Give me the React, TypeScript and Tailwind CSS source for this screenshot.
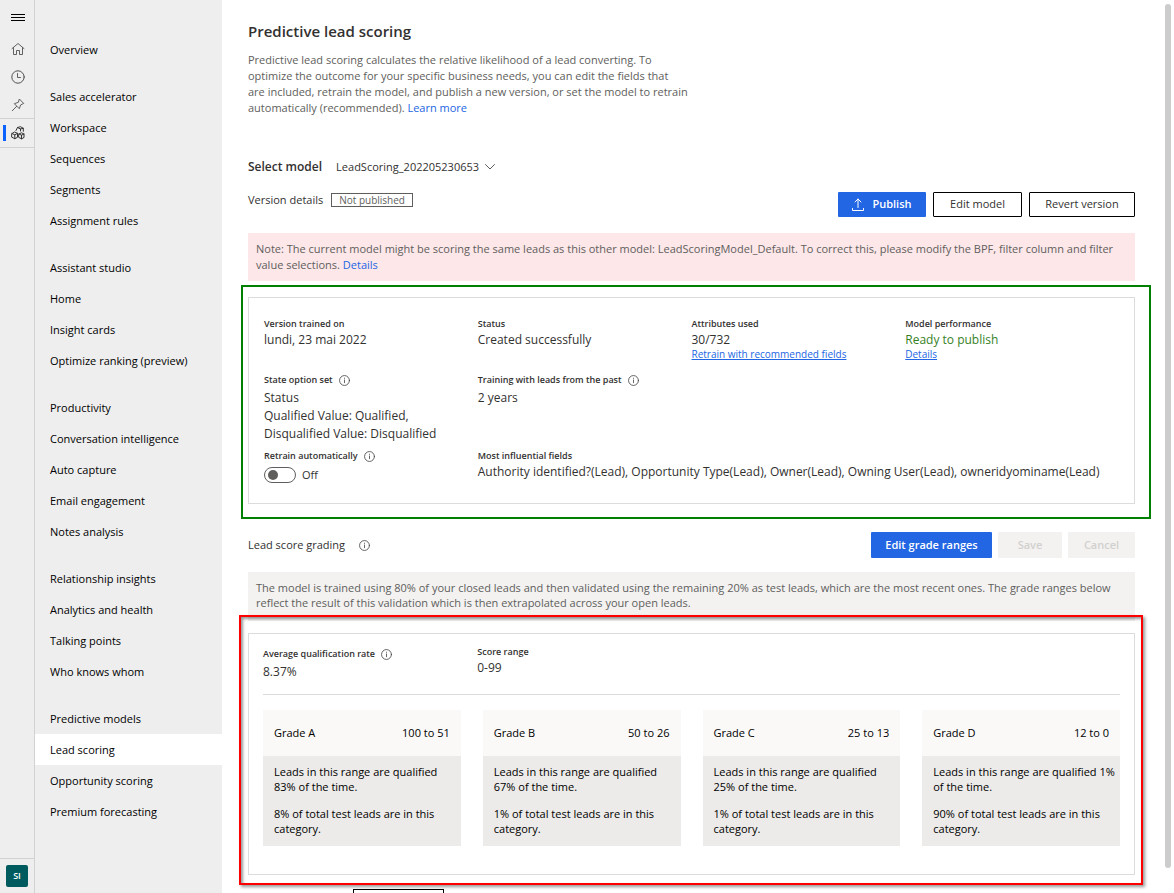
const navGroups = [
  { title: "", items: ["Overview"] },
  {
    title: "Sales accelerator",
    items: ["Workspace", "Sequences", "Segments", "Assignment rules"],
  },
  {
    title: "Assistant studio",
    items: ["Home", "Insight cards", "Optimize ranking (preview)"],
  },
  {
    title: "Productivity",
    items: [
      "Conversation intelligence",
      "Auto capture",
      "Email engagement",
      "Notes analysis",
    ],
  },
  {
    title: "Relationship insights",
    items: ["Analytics and health", "Talking points", "Who knows whom"],
  },
  {
    title: "Predictive models",
    items: ["Lead scoring", "Opportunity scoring", "Premium forecasting"],
  },
];

const grades = [
  {
    name: "Grade A",
    range: "100 to 51",
    qualified: "Leads in this range are qualified\n83% of the time.",
    total: "8% of total test leads are in this category.",
  },
  {
    name: "Grade B",
    range: "50 to 26",
    qualified: "Leads in this range are qualified\n67% of the time.",
    total: "1% of total test leads are in this category.",
  },
  {
    name: "Grade C",
    range: "25 to 13",
    qualified: "Leads in this range are qualified\n25% of the time.",
    total: "1% of total test leads are in this category.",
  },
  {
    name: "Grade D",
    range: "12 to 0",
    qualified: "Leads in this range are qualified 1%\nof the time.",
    total: "90% of total test leads are in this category.",
  },
];

const iconProps = {
  fill: "none",
  stroke: "currentColor",
  strokeLinecap: "round" as const,
  strokeLinejoin: "round" as const,
};

const InfoIcon = () => (
  <svg viewBox="0 0 12 12" className="size-[11px] shrink-0 text-[#484644]" {...iconProps}>
    <circle cx="6" cy="6" r="5.4" strokeWidth="0.9" />
    <path d="M6 5.4v3M6 3.4v.3" strokeWidth="0.9" />
  </svg>
);

const Rail = () => (
  <div className="flex w-[35px] shrink-0 flex-col border-r border-[#d2d2d2] text-[#505050]">
    <button aria-label="Menu" className="flex h-[35px] items-center pl-[11px] text-black">
      <svg viewBox="0 0 14 8" className="h-2 w-[14px]" fill="currentColor">
        <path d="M0 0h14v1H0zM0 3h14v1H0zM0 6h14v1H0z" />
      </svg>
    </button>
    <button aria-label="Home" className="flex h-7 items-center pl-[11px]">
      <svg viewBox="0 0 14 14" className="size-[14px]" {...iconProps}>
        <path d="M1 6.600 7 1.500l6 5.100M2.500 5.600v6.900h3V8.500h3v4h3V5.600" strokeWidth="0.9" />
      </svg>
    </button>
    <button aria-label="Recent" className="flex h-7 items-center pl-[11px]">
      <svg viewBox="0 0 14 14" className="size-[14px]" {...iconProps}>
        <circle cx="7" cy="7" r="6.2" />
        <path d="M6.500 3.500v4h3" strokeWidth="0.9" />
      </svg>
    </button>
    <button aria-label="Pinned" className="flex h-[27px] items-center pl-[11px]">
      <svg viewBox="0 0 14 14" className="size-[14px]" {...iconProps}>
        <path
          d="M8.600 1.300 12.700 5.400 9.600 7l-1.300 3.700L3.300 5.700 7 4.400zM5.600 8.400 1.300 12.700"
          strokeWidth="0.9"
        />
      </svg>
    </button>
    <button
      aria-label="Sales insights"
      className="flex h-[30px] items-center border-y border-[#d2d2d2] pl-[3px]">
      <span className="h-4 w-[3px] bg-[#0b62fe]" />
      <svg viewBox="0 0 14 14" className="ml-[5px] size-[14px] text-[#333]" {...iconProps}>
        <path d="M5 4.500 6.500 1.500l3-.8 2.800 1.600v3M6.500 1.500l3 1.500 2.800-.7M9.500 3v2" />
        <path d="M1 7.500 3.500 6l3 1.300v4L3.800 12.700 1 11.300zM1 7.500l2.800 1.300 2.700-1.500M3.800 8.800v3.900" />
        <path d="M8 8l2.500-1.200L13 8v3.500l-2.500 1.300L8 11.500zM8 8l2.500 1.200L13 8M10.500 9.200v3.600" />
      </svg>
    </button>
    <div className="mt-auto flex h-[35px] items-center border-t border-[#d2d2d2] pl-1.5">
      <button className="size-[22px] rounded-[2px] bg-[#005b5e] text-[9px] font-semibold text-white">
        SI
      </button>
    </div>
  </div>
);

const SideNav = () => (
  <nav className="w-[187px] shrink-0 overflow-hidden pt-[34px] text-[11px] text-black">
    {navGroups.map((group, index) => (
      <section key={index} className="mb-4">
        {group.title && (
          <h2 className="flex h-[31px] items-center pt-0.5 pl-[15px] font-medium">
            {group.title}
          </h2>
        )}
        {group.items.map((item) => (
          <a
            key={item}
            href="#"
            className={
              item === "Lead scoring"
                ? "flex h-[31px] items-center bg-white pt-0.5 pl-[15px]"
                : "flex h-[31px] items-center pt-0.5 pl-[15px]"
            }>
            {item}
          </a>
        ))}
      </section>
    ))}
  </nav>
);

const ModelDetails = () => (
  <section className="relative mt-4 border border-[#dcdcdc] px-[15px] pt-[19px] pb-5">
    <div className="grid grid-cols-4">
      <div className="h-14">
        <h3 className="text-[9px]/[14px] font-semibold">Version trained on</h3>
        <p className="text-[12px]/[18px]">lundi, 23 mai 2022</p>
      </div>
      <div>
        <h3 className="text-[9px]/[14px] font-semibold">Status</h3>
        <p className="text-[12px]/[18px]">Created successfully</p>
      </div>
      <div>
        <h3 className="text-[9px]/[14px] font-semibold">Attributes used</h3>
        <p className="text-[12px]/[18px]">30/732</p>
        <a href="#" className="block text-[10px]/[11px] text-[#2266e3] underline">
          Retrain with recommended fields
        </a>
      </div>
      <div>
        <h3 className="text-[9px]/[14px] font-semibold">Model performance</h3>
        <p className="text-[12px]/[18px] text-[#36811f]">Ready to publish</p>
        <a href="#" className="block text-[10px]/[11px] text-[#2266e3] underline">
          Details
        </a>
      </div>
      <div className="h-[76px]">
        <h3 className="flex items-center gap-1.5 text-[9px]/[14px] font-semibold">
          State option set <InfoIcon />
        </h3>
        <p className="mt-0.5 text-[12px]/[18px]">
          Status
          <br />
          Qualified Value: Qualified,
          <br />
          Disqualified Value: Disqualified
        </p>
      </div>
      <div className="col-span-3">
        <h3 className="flex items-center gap-1.5 text-[9px]/[14px] font-semibold">
          Training with leads from the past <InfoIcon />
        </h3>
        <p className="mt-0.5 text-[12px]/[18px]">2 years</p>
      </div>
      <div>
        <h3 className="flex items-center gap-1.5 text-[9px]/[14px] font-semibold">
          Retrain automatically <InfoIcon />
        </h3>
        <label className="mt-1 flex items-center gap-1.5 text-[11px]/[16px]">
          <input type="checkbox" role="switch" className="peer sr-only" />
          <span className="flex h-4 w-8 items-center rounded-full border border-[#605e5c] pl-[3px] peer-checked:justify-end peer-checked:pr-[3px]">
            <span className="size-[10px] rounded-full bg-[#605e5c]" />
          </span>
          Off
        </label>
      </div>
      <div className="col-span-3">
        <h3 className="text-[9px]/[14px] font-semibold">Most influential fields</h3>
        <p className="text-[12px]/[18px]">
          Authority identified?(Lead), Opportunity Type(Lead), Owner(Lead), Owning User(Lead),
          owneridyominame(Lead)
        </p>
      </div>
    </div>
    <div className="pointer-events-none absolute -top-[13px] -right-[17px] -bottom-4 -left-2 border-2 border-[#008000]" />
  </section>
);

const GradeRanges = () => (
  <section className="relative mt-3 border border-[#dcdcdc] px-[14px] pt-[11px] pb-7">
    <div className="grid h-[50px] grid-cols-4 border-b border-[#dcdcdc]">
      <div>
        <h3 className="flex items-center gap-1.5 text-[9px]/[18px] font-semibold">
          Average qualification rate <InfoIcon />
        </h3>
        <p className="text-[12px]/[18px]">8.37%</p>
      </div>
      <div>
        <h3 className="text-[9px]/[14px] font-semibold">Score range</h3>
        <p className="text-[12px]/[18px]">0-99</p>
      </div>
    </div>
    <div className="mt-[15px] grid grid-cols-4 gap-[22px] text-[11px] text-black">
      {grades.map((grade) => (
        <article key={grade.name} className="bg-[#ecebe9]">
          <header className="flex h-[46px] items-center justify-between bg-[#faf9f8] px-[11px] font-medium">
            <h4>{grade.name}</h4>
            <span>{grade.range}</span>
          </header>
          <div className="flex flex-col gap-3 pt-2 pb-[10px] pl-[11px] leading-[15px]">
            <p className="whitespace-pre-line">{grade.qualified}</p>
            <p className="pr-[11px]">{grade.total}</p>
          </div>
        </article>
      ))}
    </div>
    <div className="pointer-events-none absolute -top-[19px] -right-[9px] -bottom-[11px] -left-2.5 border-2 border-[#f00] shadow-[2px_2px_3px_#0006,inset_2px_2px_3px_#0006]" />
  </section>
);

export default function App() {
  return (
    <div className="flex h-screen overflow-hidden bg-[#eeeeee] font-['Open_Sans','Noto_Sans',sans-serif] text-[#323130]">
      <Rail />
      <SideNav />
      <main className="flex min-w-0 flex-1 bg-white">
        <div className="min-w-0 flex-1 pt-5 pr-[30px] pl-[26px] text-[11px]">
          <h1 className="text-[15px]/[22px] font-semibold">Predictive lead scoring</h1>
          <p className="mt-2.5 leading-4 text-[#605e5c]">
            Predictive lead scoring calculates the relative likelihood of a lead converting. To
            <br />
            optimize the outcome for your specific business needs, you can edit the fields that
            <br />
            are included, retrain the model, and publish a new version, or set the model to retrain
            <br />
            automatically (recommended).{" "}
            <a href="#" className="text-[#2266e3]">
              Learn more
            </a>
          </p>
          <div className="mt-10 flex h-[22px] items-center gap-[14px]">
            <label htmlFor="model" className="text-[12px] font-semibold">
              Select model
            </label>
            <div className="flex items-center">
              <select id="model" className="w-[160px] appearance-none bg-transparent">
                <option>LeadScoring_202205230653</option>
              </select>
              <svg
                viewBox="0 0 12 8"
                className="pointer-events-none -ml-3 h-2 w-3 text-[#605e5c]"
                {...iconProps}>
                <path d="m1.500 1.500 4.500 4.500 4.500-4.500" />
              </svg>
            </div>
          </div>
          <div className="mt-[14px] flex h-[25px] justify-between">
            <div className="flex h-4 items-center gap-2">
              <h2 className="font-medium">Version details</h2>
              <span className="border border-[#605e5c] px-[7px] text-[10px]/[12px] text-[#605e5c]">
                Not published
              </span>
            </div>
            <div className="flex gap-[7px] font-medium">
              <button className="flex w-[88px] items-center justify-center gap-2 rounded-[1px] bg-[#2266e3] font-semibold text-white">
                <svg viewBox="0 0 12 13" className="h-[13px] w-3" {...iconProps}>
                  <path d="M6 9.500V1M3 4l3-3 3 3M.5 10.500v2h11v-2" />
                </svg>
                Publish
              </button>
              <button className="w-[89px] rounded-[1px] border border-black">Edit model</button>
              <button className="w-[106px] rounded-[1px] border border-black">
                Revert version
              </button>
            </div>
          </div>
          <p className="mt-4 bg-[#fde7e9] p-2 leading-4 text-[#605e5c]">
            Note: The current model might be scoring the same leads as this other model:
            LeadScoringModel_Default. To correct this, please modify the BPF, filter column and
            filter value selections.{" "}
            <a href="#" className="text-[#2266e3]">
              Details
            </a>
          </p>
          <ModelDetails />
          <div className="mt-7 flex h-[26px] items-center justify-between">
            <h2 className="flex items-center gap-[14px] font-medium">
              Lead score grading <InfoIcon />
            </h2>
            <div className="flex h-full gap-1.5 font-semibold">
              <button className="w-[121px] rounded-[1px] bg-[#2266e3] text-white">
                Edit grade ranges
              </button>
              <button disabled className="w-16 rounded-[1px] bg-[#f3f2f1] text-[#d2d0ce]">
                Save
              </button>
              <button disabled className="w-[67px] rounded-[1px] bg-[#f3f2f1] text-[#d2d0ce]">
                Cancel
              </button>
            </div>
          </div>
          <p className="mt-[14px] bg-[#f3f2f1] px-2 pt-2 pb-[11px] leading-[15px] text-[#605e5c]">
            The model is trained using 80% of your closed leads and then validated using the
            remaining 20% as test leads, which are the most recent ones. The grade ranges below
            reflect the result of this validation which is then extrapolated across your open leads.
          </p>
          <GradeRanges />
          <button
            aria-label="More"
            className="mt-[14px] ml-[105px] h-6 w-[91px] border border-black"
          />
        </div>
        <div className="w-[9px] shrink-0 pt-1">
          <div className="h-[864px] w-1.5 rounded-[3px] bg-[#cccccc]" />
        </div>
      </main>
    </div>
  );
}
